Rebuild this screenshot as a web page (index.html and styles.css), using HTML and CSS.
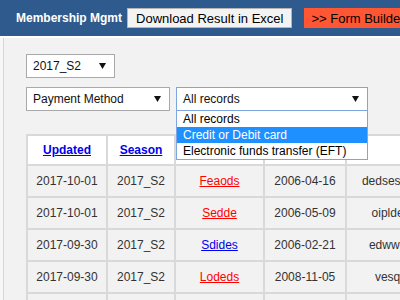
FILE: index.html
```html
<!DOCTYPE html>
<html lang="en">
<head>
    <meta charset="UTF-8">
    <meta name="viewport" content="width=device-width, initial-scale=1.0">
    <title>Membership Mgmt</title>
    <link rel="stylesheet" href="styles.css">
</head>
<body>

<header class="topbar">
    <span class="brand">Membership Mgmt</span>
    <button class="btn">Download Result in Excel</button>
    <button class="btn btn-hot">&gt;&gt; Form Builder</button>
</header>

<div class="page">
    <div class="filters">
        <div class="filter-row">
            <div class="pick pick-season">
                <span>2017_S2</span>
                <svg class="caret" width="7" height="6" viewBox="0 0 7 6"><polygon points="0,0 7,0 3.5,6"/></svg>
            </div>
        </div>
        <div class="filter-row">
            <div class="pick pick-field">
                <span>Payment Method</span>
                <svg class="caret" width="7" height="6" viewBox="0 0 7 6"><polygon points="0,0 7,0 3.5,6"/></svg>
            </div>
            <div class="combo">
                <div class="pick pick-value is-open">
                    <span>All records</span>
                    <svg class="caret" width="7" height="6" viewBox="0 0 7 6"><polygon points="0,0 7,0 3.5,6"/></svg>
                </div>
                <ul class="options">
                    <li>All records</li>
                    <li class="selected">Credit or Debit card</li>
                    <li>Electronic funds transfer (EFT)</li>
                </ul>
            </div>
        </div>
    </div>

    <table class="records">
        <thead>
            <tr>
                <th class="c-updated"><a href="#">Updated</a></th>
                <th class="c-season"><a href="#">Season</a></th>
                <th class="c-name"><a href="#">Name</a></th>
                <th class="c-dob"><a href="#">Birthday</a></th>
                <th class="c-mail"><a href="#">Email</a></th>
            </tr>
        </thead>
        <tbody>
            <tr>
                <td>2017-10-01</td>
                <td>2017_S2</td>
                <td><a class="flag" href="#">Feaods</a></td>
                <td>2006-04-16</td>
                <td>dedsess@example.com</td>
            </tr>
            <tr>
                <td>2017-10-01</td>
                <td>2017_S2</td>
                <td><a class="flag" href="#">Sedde</a></td>
                <td>2006-05-09</td>
                <td>oiplde@hotmail.com</td>
            </tr>
            <tr>
                <td>2017-09-30</td>
                <td>2017_S2</td>
                <td><a href="#">Sdides</a></td>
                <td>2006-02-21</td>
                <td>edwwe@hotmail.com</td>
            </tr>
            <tr>
                <td>2017-09-30</td>
                <td>2017_S2</td>
                <td><a class="flag" href="#">Lodeds</a></td>
                <td>2008-11-05</td>
                <td>vesq@hotmail.com</td>
            </tr>
            <tr>
                <td>2017-09-29</td>
                <td>2017_S2</td>
                <td><a href="#">Mirela</a></td>
                <td>2007-01-12</td>
                <td>mirela@hotmail.com</td>
            </tr>
        </tbody>
    </table>
</div>

</body>
</html>
```

FILE: styles.css
```css
html, body {
    overflow: hidden;
}
body {
    font-family: 'Liberation Sans', Arial, sans-serif;
    margin: 0;
    padding: 0;
    background-color: #f7f7f7;
    color: #333;
}
.topbar {
    display: flex;
    align-items: center;
    height: 36px;
    padding-left: 16px;
    background-color: #2f5a8e; /* Dark Blue */
    border-bottom: 2px solid #fff;
    white-space: nowrap;
}
.brand {
    color: #fff;
    font-size: 12px;
    font-weight: bold;
    margin-right: 5px;
}
.btn {
    height: 20px;
    padding: 0 8px;
    font-family: inherit;
    font-size: 13px;
    color: #000;
    background-color: #f3f3f3;
    border: 1px solid #b5b5b5;
    border-radius: 0;
    flex-shrink: 0;
}
.btn-hot {
    margin-left: 12px;
    padding-left: 6px;
    background-color: #ff5733; /* Orange Red */
    border-color: #ff5733;
}
.page {
    margin-left: 3px;
    min-height: 300px;
    padding: 16px 0 0 22px;
    border-left: 1px solid #d6d6d6;
    background-color: #f2f2f2;
}
.filters {
    display: flow-root;
}
.filter-row {
    display: flex;
    margin-bottom: 9px;
}
.pick {
    display: flex;
    align-items: center;
    justify-content: space-between;
    box-sizing: border-box;
    height: 24px;
    padding: 0 8px 0 6px;
    font-size: 12px;
    color: #111;
    background-color: #fff;
    border: 1px solid #a9a9a9;
}
.caret {
    fill: #111;
}
.pick-season {
    width: 89px;
}
.pick-field {
    width: 144px;
}
.combo {
    position: relative;
    margin-left: 6px;
}
.pick-value {
    width: 192px;
}
.pick-value.is-open {
    border-color: #7ea6e0;
}
.options {
    position: absolute;
    top: 100%;
    left: 0;
    z-index: 5;
    box-sizing: border-box;
    width: 192px;
    margin: 0;
    padding: 0;
    list-style: none;
    background-color: #fff;
    border: 1px solid #7ea6e0;
    border-top: none;
}
.options li {
    height: 16px;
    line-height: 16px;
    padding-left: 6px;
    font-size: 12px;
    color: #000;
    white-space: nowrap;
}
.options li.selected {
    background-color: #1e90ff; /* Dodger Blue */
    color: #fff;
}
.records {
    margin-top: 14px;
    table-layout: fixed;
    width: 481px;
    border-spacing: 0;
    border-top: 2px solid #d9d9d9;
    border-left: 2px solid #d9d9d9;
    font-size: 12px;
}
.records th,
.records td {
    box-sizing: border-box;
    padding: 0;
    text-align: center;
    border-right: 2px solid #d9d9d9;
    border-bottom: 2px solid #d9d9d9;
}
.records th {
    height: 30px;
    background-color: #fff;
}
.records td {
    height: 32px;
    background-color: #f2f2f2;
    color: #333;
}
.records a {
    color: #0000ee;
}
.records th a {
    font-weight: bold;
}
.records a.flag {
    color: #f00;
}
.c-updated { width: 80px; }
.c-season { width: 68px; }
.c-name { width: 89px; }
.c-dob { width: 82px; }
.c-mail { width: 160px; }
```
